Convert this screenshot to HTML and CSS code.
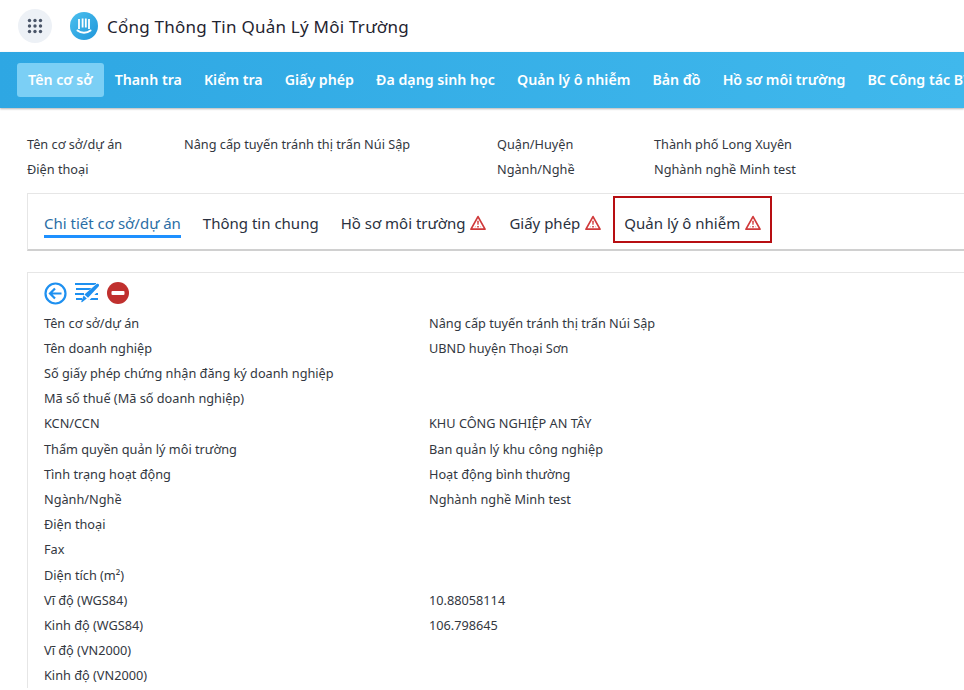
FILE: index.html
```html
<!DOCTYPE html>
<html lang="vi">
<head>
<meta charset="utf-8">
<title>Cổng Thông Tin Quản Lý Môi Trường</title>
<link rel="stylesheet" href="styles.css">
</head>
<body>
<header class="topbar">
  <button class="apps" aria-label="Ứng dụng">
    <svg width="16" height="16" viewBox="0 0 16 16" fill="#4a5568"><circle cx="2.5" cy="2.5" r="1.7"/><circle cx="8" cy="2.5" r="1.7"/><circle cx="13.5" cy="2.5" r="1.7"/><circle cx="2.5" cy="8" r="1.7"/><circle cx="8" cy="8" r="1.7"/><circle cx="13.5" cy="8" r="1.7"/><circle cx="2.5" cy="13.5" r="1.7"/><circle cx="8" cy="13.5" r="1.7"/><circle cx="13.5" cy="13.5" r="1.7"/></svg>
  </button>
  <svg class="logo" width="28" height="28" viewBox="0 0 28 28">
    <defs><linearGradient id="lg" x1="0" y1="0" x2="1" y2="1"><stop offset="0" stop-color="#4cc0ee"/><stop offset="1" stop-color="#1f96da"/></linearGradient></defs>
    <circle cx="14" cy="14" r="14" fill="url(#lg)"/>
    <path d="M9 7v10M12.6 6.5v9M15.8 6.5v9M19 7v10" stroke="#fff" stroke-width="1.8" fill="none"/>
    <path d="M7.5 18.5c3.5 3 9.5 3 13 0" stroke="#fff" stroke-width="2" fill="none" stroke-linecap="round"/>
  </svg>
  <h1 class="brand">Cổng Thông Tin Quản Lý Môi Trường</h1>
</header>
<nav class="nav">
  <a class="nav-item active">Tên cơ sở</a>
  <a class="nav-item">Thanh tra</a>
  <a class="nav-item">Kiểm tra</a>
  <a class="nav-item">Giấy phép</a>
  <a class="nav-item">Đa dạng sinh học</a>
  <a class="nav-item">Quản lý ô nhiễm</a>
  <a class="nav-item">Bản đồ</a>
  <a class="nav-item">Hồ sơ môi trường</a>
  <a class="nav-item">BC Công tác BVMT</a>
</nav>
<main class="content">
  <section class="summary">
    <span class="s1">Tên cơ sở/dự án</span><span class="s2">Nâng cấp tuyến tránh thị trấn Núi Sập</span><span class="s3">Quận/Huyện</span><span>Thành phố Long Xuyên</span>
    <span class="s1">Điện thoại</span><span class="s2"></span><span class="s3">Ngành/Nghề</span><span>Nghành nghề Minh test</span>
  </section>
  <section class="tabs">
    <a class="tab current">Chi tiết cơ sở/dự án</a>
    <a class="tab">Thông tin chung</a>
    <a class="tab">Hồ sơ môi trường <svg class="warn" viewBox="0 0 16 16"><use href="#warn"/></svg></a>
    <a class="tab">Giấy phép <svg class="warn" viewBox="0 0 16 16"><use href="#warn"/></svg></a>
    <a class="tab boxed">Quản lý ô nhiễm <svg class="warn" viewBox="0 0 16 16"><use href="#warn"/></svg></a>
  </section>
  <section class="detail">
    <div class="actions">
      <svg width="23" height="23" viewBox="0 0 23 23" fill="none" stroke="#1e90f0" stroke-width="2.2"><circle cx="11.5" cy="11.5" r="10"/><path d="M17.5 11.5H6.5M11 6.5l-5 5 5 5"/></svg>
      <svg width="24" height="20" viewBox="0 0 24 20" fill="#1e90f0"><rect x="0" y="0" width="21" height="2"/><rect x="1" y="5" width="15" height="2"/><rect x="0" y="10" width="9" height="2"/><rect x="1" y="15" width="6" height="2"/><rect x="15" y="10" width="8" height="2"/><rect x="13" y="15" width="10" height="2"/><path d="M22.8 3.5 11.5 15" stroke="#fff" stroke-width="7" fill="none"/><path d="M21.6 1c.9-.6 2-.4 2.3.5.3.8 0 1.6-.6 2.2L13 14.8l-3.6-3.4zM8.6 12.6l3.2 3-4.8 3.6c-.4.3-.9-.1-.7-.6z"/></svg>
      <svg width="22" height="22" viewBox="0 0 22 22"><circle cx="11" cy="11" r="11" fill="#c0302e"/><rect x="4.5" y="9" width="13" height="4" rx="1" fill="#fff"/></svg>
    </div>
    <dl class="fields">
      <dt>Tên cơ sở/dự án</dt><dd>Nâng cấp tuyến tránh thị trấn Núi Sập</dd>
      <dt>Tên doanh nghiệp</dt><dd>UBND huyện Thoại Sơn</dd>
      <dt>Số giấy phép chứng nhận đăng ký doanh nghiệp</dt><dd></dd>
      <dt>Mã số thuế (Mã số doanh nghiệp)</dt><dd></dd>
      <dt>KCN/CCN</dt><dd>KHU CÔNG NGHIỆP AN TÂY</dd>
      <dt>Thẩm quyền quản lý môi trường</dt><dd>Ban quản lý khu công nghiệp</dd>
      <dt>Tình trạng hoạt động</dt><dd>Hoạt động bình thường</dd>
      <dt>Ngành/Nghề</dt><dd>Nghành nghề Minh test</dd>
      <dt>Điện thoại</dt><dd></dd>
      <dt>Fax</dt><dd></dd>
      <dt>Diện tích (m²)</dt><dd></dd>
      <dt>Vĩ độ (WGS84)</dt><dd>10.88058114</dd>
      <dt>Kinh độ (WGS84)</dt><dd>106.798645</dd>
      <dt>Vĩ độ (VN2000)</dt><dd></dd>
      <dt>Kinh độ (VN2000)</dt><dd></dd>
    </dl>
  </section>
</main>
<svg class="defs" width="0" height="0"><defs><g id="warn"><path d="M8 1.6 15 14.2H1z" fill="none" stroke="#d0393a" stroke-width="1.7" stroke-linejoin="round"/><path d="M7.2 5.8h1.6l-.2 4H7.4zM7.2 11h1.6v1.5H7.2z" fill="#d0393a"/><path d="M4.4 12.2h1.4v-1.2zM10.2 11v1.2h1.4z" fill="#e58a8a"/></g></defs></svg>
</body>
</html>
```
FILE: styles.css
```css
* { box-sizing: border-box; }
html, body { margin: 0; height: 690px; overflow: hidden; background: #fff; }
body { font-family: "Noto Sans", "Open Sans", sans-serif; font-size: 12.72px; color: #33383f; }
.topbar { height: 52px; display: flex; align-items: center; padding-left: 18px; }
.apps { width: 34px; height: 34px; border: 0; border-radius: 50%; background: #edf1f6; display: flex; align-items: center; justify-content: center; padding: 0; }
.logo { margin-left: 18px; }
.brand { margin: 0 0 0 9px; font-size: 17px; font-weight: 400; color: #1f2430; letter-spacing: .24px; white-space: nowrap; }
.nav { height: 56px; display: flex; align-items: center; padding-left: 17px; background: linear-gradient(90deg, #2ea7e3, #40b8ec); box-shadow: 0 1px 2px rgba(0,0,0,.3); white-space: nowrap; overflow: hidden; }
.nav-item { flex: none; height: 34px; line-height: 34px; padding: 0 11.06px; font-size: 14.2px; font-weight: 600; color: #fff; border-radius: 3px; }
.active { background: #7bcff5; }
.content { padding: 0 0 0 27px; }
.summary { margin-top: 23px; display: grid; grid-template-columns: 157px 313px 157px 1fr; grid-auto-rows: 25px; align-items: center; }
.tabs { margin-top: 12px; height: 58px; display: flex; align-items: center; padding: 2px 0 0 16px; gap: 22px; border: 1px solid #e6e6e6; border-right: 0; border-bottom: 2px solid #d0d0d0; }
.tab { position: relative; display: flex; align-items: center; gap: 5px; font-size: 15px; color: #2a3140; white-space: nowrap; }
.tab.current { color: #2b6ea5; }
.tab.current::after { content: ""; position: absolute; left: 0; right: 0; bottom: -5px; height: 3px; background: #1e90ff; }
.boxed::before { content: ""; position: absolute; left: -11.5px; right: -10px; top: -17px; bottom: -10px; border: 2px solid #b70e12; }
.warn { width: 16px; height: 16px; margin-right: 1px; }
.detail { margin-top: 21px; padding: 7px 16px 0; border: 1px solid #e6e6e6; border-width: 1px 0 0 1px; }
.actions { display: flex; align-items: center; gap: 8px; height: 26px; }
.fields { margin: 4.1px 0 0; display: grid; grid-template-columns: 385px 1fr; grid-auto-rows: 25.2px; align-items: center; }
dt, dd { margin: 0; white-space: nowrap; }
.defs { position: absolute; }
```
